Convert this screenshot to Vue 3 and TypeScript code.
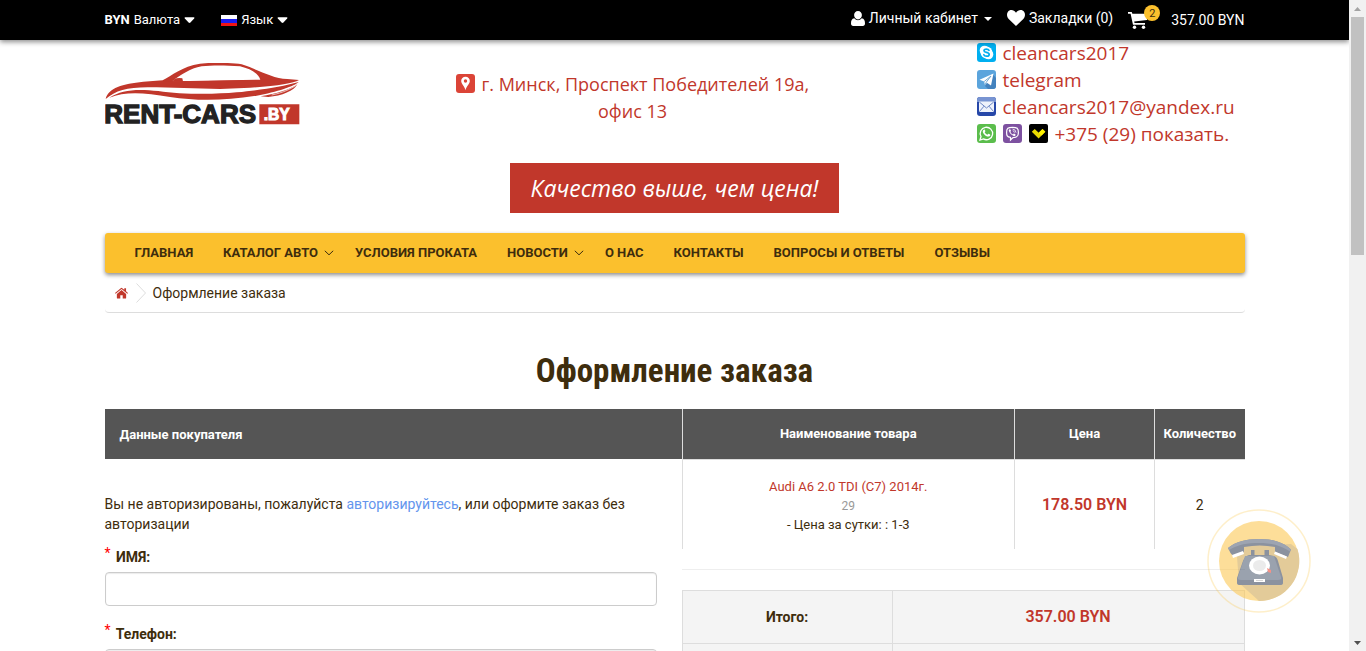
<script setup lang="ts">
import { ref } from 'vue'

interface NavItem {
  title: string
  dropdown?: boolean
}

interface Field {
  id: string
  label: string
}

const navItems: NavItem[] = [
  { title: 'ГЛАВНАЯ' },
  { title: 'КАТАЛОГ АВТО', dropdown: true },
  { title: 'УСЛОВИЯ ПРОКАТА' },
  { title: 'НОВОСТИ', dropdown: true },
  { title: 'О НАС' },
  { title: 'КОНТАКТЫ' },
  { title: 'ВОПРОСЫ И ОТВЕТЫ' },
  { title: 'ОТЗЫВЫ' },
]

const fields: Field[] = [
  { id: 'name', label: 'ИМЯ:' },
  { id: 'phone', label: 'Телефон:' },
]

const values = ref<Record<string, string>>({ name: '', phone: '' })
</script>

<template>
  <div class="shell">
    <div class="page">
      <header class="topbar">
        <div class="container topbar-row">
          <div class="top-left">
            <button type="button" class="top-btn"><strong>BYN</strong> Валюта
              <svg class="caret" viewBox="0 0 12 7"><path d="M1.500 0h9q1.500 0 .6 1.200L7 5.800q-1 1-2 0L.9 1.200Q0 0 1.500 0z" fill="#fff" /></svg>
            </button>
            <button type="button" class="top-btn">
              <svg class="flag" viewBox="0 0 16 11"><path fill="#fff" d="M0 0h16v4H0z" /><path fill="#1c1cf0" d="M0 4h16v4H0z" /><path fill="#f01414" d="M0 8h16v3H0z" /></svg>
              Язык
              <svg class="caret" viewBox="0 0 12 7"><path d="M1.500 0h9q1.500 0 .6 1.200L7 5.800q-1 1-2 0L.9 1.200Q0 0 1.500 0z" fill="#fff" /></svg>
            </button>
          </div>
          <div class="top-right">
            <a href="#" class="top-link">
              <svg class="i-user" viewBox="0 0 14 15"><path fill="#fff" d="M7 0c2.300 0 3.900 1.700 3.900 4S9.300 8.400 7 8.400 3.100 6.300 3.100 4 4.700 0 7 0zM3.300 7.300C4.300 8.600 5.600 9.300 7 9.300s2.700-.7 3.700-2C13.200 7.500 14 9.800 14 12.600 14 14 13.200 15 11.800 15H2.200C.8 15 0 14 0 12.600 0 9.800.8 7.500 3.300 7.300z" /></svg>
              <span>Личный кабинет</span>
              <svg class="tiny-caret" viewBox="0 0 8 4"><path fill="#fff" d="M0 0h8L4 4z" /></svg>
            </a>
            <a href="#" class="top-link">
              <svg class="i-heart" viewBox="0 0 18 16"><path fill="#fff" d="M9 16 1.700 8.900C-.2 7-.5 4 .8 2c1.900-2.700 6-2.600 8.200.7C11.200-.6 15.300-.7 17.200 2c1.300 2 1 5-.9 6.900z" /></svg>
              <span>Закладки (0)</span>
            </a>
            <a href="#" class="top-link cart">
              <span class="cart-icon">
                <svg class="i-cart" viewBox="0 0 19 17"><path fill="#fff" d="M0 0h3.700l.7 1.700H19v6.400L6.200 9.600l.3 1.500H17v1.700H5L2.600 1.700H0z" /><circle cx="6.500" cy="15.200" r="1.700" fill="#fff" /><circle cx="15.500" cy="15.200" r="1.700" fill="#fff" /></svg>
                <span class="badge">2</span>
              </span>
              <span>357.00 BYN</span>
            </a>
          </div>
        </div>
      </header>

      <div class="container head">
        <a href="#" class="logo" aria-label="RENT-CARS.BY">
          <svg viewBox="45 24 585 204">
            <path fill="#c1372b" fill-rule="evenodd" d="M47 132C55 98 98 87 160 80L218 76C248 60 275 35 330 26C362 23 425 22 455 28C505 44 545 70 592 72L627 75C610 85 560 93 480 98L390 102L200 97C120 94 80 103 47 132zM247 79L352 78L511 75C507 58 485 42 450 34C405 31 365 31 335 34C300 40 272 60 247 79z" />
            <path fill="#c1372b" d="M200 79L300 78L512 74L560 74L540 92L200 96z" />
            <path fill="#c1372b" d="M253 73q9-6 24-3l2 9h-32z" />
            <path fill="#c1372b" d="M58 128C95 104 140 101 205 108C270 118 370 119 440 112C520 104 575 95 626 81C615 93 560 111 500 122C400 138 320 138 240 126C160 112 105 109 58 128z" />
            <path fill="#c1372b" d="M512 124C560 116 600 104 622 88C614 107 575 123 535 126z" />
            <path fill="none" stroke="#fff" stroke-width="2" d="M545 120C580 113 602 102 620 90" />
            <text x="43" y="205" font-family="Liberation Sans, Arial, sans-serif" font-weight="700" font-size="78" fill="#222" stroke="#222" stroke-width="4">RENT-CARS</text>
            <path fill="#c1372b" d="M508 148h120v60H508z" />
            <text x="521" y="195" font-family="Liberation Sans, Arial, sans-serif" font-weight="700" font-size="47" fill="#fff" stroke="#fff" stroke-width="3">.BY</text>
          </svg>
        </a>
        <div class="address">
          <svg class="ico" viewBox="0 0 19 19"><rect width="19" height="19" rx="3" fill="#db4437" /><path fill="#fff" fill-rule="evenodd" d="M9.500 2.800c2.500 0 4.300 1.900 4.300 4.300 0 2.900-3.100 4.400-4.300 9.200C8.300 11.500 5.200 10 5.200 7.100c0-2.400 1.800-4.300 4.300-4.300zm0 2.500a1.700 1.700 0 1 0 0 3.400 1.700 1.700 0 0 0 0-3.400z" /></svg>
          г. Минск, Проспект Победителей 19а,<br>офис 13
        </div>
        <div class="contacts">
          <a href="#">
            <svg class="ico" viewBox="0 0 19 19"><rect width="19" height="19" rx="3" fill="#00aff0" /><circle cx="7.500" cy="7.500" r="4.800" fill="#fff" /><circle cx="11.500" cy="11.500" r="4.800" fill="#fff" /><circle cx="9.500" cy="9.500" r="5.900" fill="#fff" /><path fill="none" stroke="#00aff0" stroke-width="1.700" stroke-linecap="round" d="M12 7.300C11.400 6 7 5.500 7 7.700c0 2.100 5.200 1.300 5.200 3.700 0 2.300-4.700 2.200-5.400.3" /></svg>
            cleancars2017</a>
          <a href="#">
            <svg class="ico" viewBox="0 0 19 19"><rect width="19" height="19" rx="3" fill="#5ba4dc" /><path fill="#4382be" d="M8 16 15.500 4 19 8v8q0 3-3 3h-5z" /><path fill="#fff" d="M2.500 9.800 16.500 3.500 14 15.500 9.900 12.700 8 15.300 7.200 11.500z" /><path fill="none" stroke="#73a9d3" stroke-width="1" d="M7.200 11.500 14 6l-4.700 6.200L8 15" /></svg>
            telegram</a>
          <a href="#">
            <svg class="ico" viewBox="0 0 19 19"><rect width="19" height="19" rx="3" fill="#2647a8" /><path fill="#7894d2" d="M3 0h13q3 0 3 3v2H0V3q0-3 3-3z" /><path fill="#eef2fb" d="M2 4.500h15v10.500H2z" /><path fill="none" stroke="#6c86c5" d="m2.300 5 7.200 6 7.200-6M2.300 14.700 7 9.200m9.700 5.500L12 9.200" /></svg>
            cleancars2017@yandex.ru</a>
          <a href="#">
            <svg class="ico" viewBox="0 0 19 19"><rect width="19" height="19" rx="3" fill="#5bbd4c" /><path fill="none" stroke="#fff" stroke-width="1.300" d="m3 16 1-3.500a6.200 6.200 0 1 1 2.400 2.400z" /><path fill="#fff" d="M7 5.500c1-.5 1.600 1.700 1.300 2l-.6.800c.6 1.200 1.400 1.900 2.700 2.400l1-1c.4-.2 2.200.8 2 1.200-.4 1.600-2 2-3.200 1.500C7.900 11.600 6.200 9.800 5.800 8c-.1-1 .4-2 1.200-2.500z" /></svg>
            <svg class="ico" viewBox="0 0 19 19"><rect width="19" height="19" rx="3" fill="#7d51a0" /><path fill="none" stroke="#fff" stroke-width="1.200" d="M7.500 13.400C4 12.800 3.600 11.500 3.600 8.300c0-4 1.400-5 5.900-5s5.900 1 5.900 5-1.400 5.300-5.400 5.300L7.500 16z" /><path fill="#fff" d="M6.700 5.200c.8-.3 1.500 1.700 1.300 1.900l-.6.700c.5 1.300 1.400 2.200 2.600 2.600l.8-.8c.5-.2 2 1 1.800 1.400-.4 1.300-1.400 1.300-2.300.8-2.200-1.100-3.700-2.700-4.500-5 0-.7.300-1.400.9-1.600z" /><path fill="none" stroke="#fff" stroke-width=".8" d="M9.500 5q3.200.2 3.500 3.700M9.700 6.700q1.500.1 1.700 1.900" /></svg>
            <svg class="ico" viewBox="0 0 19 19"><rect width="19" height="19" rx="2" fill="#000" /><path fill="#e8d800" d="M2.800 7.800 5.700 5l4 3.700L13.500 5l2.800 2.800-6.700 6.700z" /><path fill="#fff200" d="m9.700 8.700 3.800-3.700 2.800 2.800-3.700 3.700z" /></svg>
            +375 (29) показать.</a>
        </div>
      </div>

      <div class="slogan"><em>Качество выше, чем цена!</em></div>

      <div class="container">
        <nav class="nav">
          <a v-for="item in navItems" :key="item.title" href="#" :class="{ drop: item.dropdown }">
            {{ item.title }}
            <svg v-if="item.dropdown" class="chev" viewBox="0 0 10 6"><path d="m.8.8 4.200 4 4.200-4" fill="none" stroke="#3e2d0d" /></svg>
          </a>
        </nav>

        <nav class="crumbs">
          <a href="#" aria-label="Главная">
            <svg class="home" viewBox="0 0 14 12"><path fill="#c1372b" d="M7 2.800 12 7v4.300q0 .7-.7.700H8.300V8.300H5.700V12h-3Q2 12 2 11.300V7zM0 6.100 6.200.8q.8-.7 1.600 0L10 2.600V1h1.900v3.200L14 6.100l-.7.8L7 1.700.7 6.900z" /></svg>
          </a>
          <svg class="sep" viewBox="0 0 10 20"><path d="m.5.500 9 9.500-9 9.500" fill="none" stroke="#ddd" /></svg>
          <span>Оформление заказа</span>
        </nav>

        <h1>Оформление заказа</h1>

        <div class="checkout">
          <section class="buyer">
            <h2>Данные покупателя</h2>
            <form @submit.prevent>
              <p>Вы не авторизированы, пожалуйста <a href="#">авторизируйтесь</a>, или оформите заказ без авторизации</p>
              <div v-for="f in fields" :key="f.id" class="field">
                <label :for="f.id"><span class="req">*</span> {{ f.label }}</label>
                <input :id="f.id" v-model="values[f.id]" type="text">
              </div>
            </form>
          </section>

          <section class="order">
            <table class="items">
              <colgroup><col><col class="c-price"><col class="c-qty"></colgroup>
              <thead>
                <tr><th>Наименование товара</th><th>Цена</th><th>Количество</th></tr>
              </thead>
              <tbody>
                <tr>
                  <td>
                    <a href="#" class="prod">Audi A6 2.0 TDI (C7) 2014г.</a>
                    <div class="model">29</div>
                    <div class="option">- Цена за сутки: : 1-3</div>
                  </td>
                  <td class="price">178.50 BYN</td>
                  <td class="qty">2</td>
                </tr>
              </tbody>
            </table>
            <hr>
            <table class="totals">
              <colgroup><col class="t-name"><col></colgroup>
              <tbody>
                <tr><th>Итого:</th><td class="price">357.00 BYN</td></tr>
                <tr><th></th><td></td></tr>
              </tbody>
            </table>
          </section>
        </div>
      </div>

      <button type="button" class="callback" aria-label="Заказать звонок">
        <svg viewBox="0 0 104 104">
          <circle cx="52" cy="52" r="51" fill="none" stroke="#fbc02d" stroke-opacity=".25" stroke-width="1.500" />
          <g opacity=".6">
            <circle cx="52" cy="52" r="40" fill="#fcc955" />
            <path fill="#d1a956" d="M22 38 84 35l6.500 5A40 40 0 0 1 52 92L32 74l-2-26z" />
            <path fill="#d1a956" d="M37 36h32v14H37z" />
            <path fill="#3f4a60" d="M21 39C28 33 39 30 52 30s25 3 32 10.500l-3 7.500-13-5V38q-15-3-31 0v5l-11 4q-3-3-5-8z" />
            <path fill="#5c687d" d="M21 39C28 33 39 30 52 30s25 3 32 10.500l-1 2C73 36 64 34 52 34s-20 1-30 7z" />
            <path fill="#fff" d="m25 46 11-4 1 3-11 4zM68 42.500l12 5-1 2.500-12-5z" />
            <path fill="#3f4a60" d="M44 41h3.500v5h10v-5H62v5l5 1q3 1 4 5l5 17v5q0 2-3 2H33q-3 0-3-2v-5l6-17q2-5 6-6h2z" />
            <path fill="#586479" d="M38 47h29l7 21q1 3-3 3H34q-4 0-3-3z" />
            <ellipse cx="52.500" cy="56.500" rx="10.500" ry="9" fill="#fff" />
            <ellipse cx="52.500" cy="56.500" rx="6.500" ry="5.500" fill="#dedede" />
            <path fill="#f04938" d="m60 59 4 2v3l-3-1z" />
            <path fill="#fff" d="M47 70h11v3H47z" />
            <path stroke="#bbb" d="M49 71.500h7" />
          </g>
        </svg>
      </button>
    </div>

    <div class="scroll" aria-hidden="true">
      <svg viewBox="0 0 17 17"><path fill="#a3a3a3" d="M5 11h7L8.500 7z" /></svg>
      <div class="thumb" />
      <svg viewBox="0 0 17 17"><path fill="#505050" d="M5 7h7l-3.500 4z" /></svg>
    </div>
  </div>
</template>

<style>
html,
body {
  margin: 0;
  background: #fff;
}
</style>

<style scoped>
* {
  box-sizing: border-box;
}
.shell {
  display: flex;
  height: 100vh;
  overflow: hidden;
  font: 14px/20px Roboto, "Open Sans", sans-serif;
  color: #3e2d0d;
}
.page {
  flex: 1;
  min-width: 0;
  overflow: hidden;
}
a {
  color: #c1372b;
  text-decoration: none;
}
button {
  border: 0;
  padding: 0;
  background: none;
  font: inherit;
  color: inherit;
  cursor: pointer;
}
svg {
  display: block;
}
.container {
  max-width: 1140px;
  margin: 0 auto;
}
.topbar {
  position: relative;
  z-index: 1;
  background: #000;
  color: #fff;
  box-shadow: 0 2px 5px rgba(0, 0, 0, 0.45);
}
.topbar-row {
  display: flex;
  justify-content: space-between;
  height: 40px;
}
.top-left {
  display: flex;
  align-items: center;
  gap: 26px;
  font-size: 13px;
}
.top-btn,
.top-link {
  display: flex;
  align-items: center;
  gap: 4px;
  color: #fff;
  white-space: nowrap;
}
.top-right {
  display: flex;
  gap: 15px;
  height: 36px;
}
.caret {
  width: 11px;
  height: 7px;
}
.flag {
  width: 16px;
  height: 11px;
}
.i-user {
  width: 14px;
  height: 15px;
}
.i-heart {
  width: 18px;
  height: 16px;
}
.tiny-caret {
  width: 8px;
  height: 4px;
  margin: 2px 0 0 2px;
}
.cart {
  gap: 11px;
  height: 40px;
}
.cart-icon {
  position: relative;
  width: 32px;
}
.i-cart {
  width: 19px;
  height: 17px;
}
.badge {
  position: absolute;
  top: -7px;
  right: 0;
  width: 16px;
  height: 16px;
  border-radius: 50%;
  background: #fbc02d;
  color: #3e2d0d;
  font-size: 11px;
  line-height: 17px;
  text-align: center;
}
.head {
  display: grid;
  grid-template-columns: 350fr 356fr 434fr;
  font-family: "Open Sans", "Noto Sans", sans-serif;
  font-size: 18px;
  line-height: 27px;
  color: #c1372b;
}
.logo {
  padding-top: 23px;
}
.logo svg {
  width: 195px;
  height: 68px;
}
.address {
  padding-top: 31px;
  text-align: center;
  white-space: nowrap;
}
.ico {
  display: inline-block;
  width: 19px;
  height: 19px;
  margin-right: 2px;
  vertical-align: -2px;
}
.ico + .ico {
  margin-left: 5px;
}
.contacts {
  justify-self: end;
  width: 268px;
  font-size: 19px;
  white-space: nowrap;
}
.contacts a {
  display: block;
}
.slogan {
  width: fit-content;
  margin: 15px auto 20px;
  padding: 0 21px;
  background: #c1372b;
  color: #fff;
  font: 23px/50px "Open Sans", "Noto Sans", sans-serif;
}
.nav {
  display: flex;
  gap: 30px;
  padding: 0 30px;
  border-radius: 3px;
  background: #fbc02d;
  box-shadow: 0 2px 4px rgba(0, 0, 0, 0.45);
  font-size: 13px;
  font-weight: 700;
  line-height: 40px;
  white-space: nowrap;
}
.nav a {
  display: flex;
  align-items: center;
  gap: 6px;
  color: #3e2d0d;
}
.nav .drop {
  margin-right: -9px;
}
.chev {
  width: 10px;
  height: 6px;
}
.crumbs {
  display: flex;
  align-items: center;
  height: 40px;
  padding: 1px 0 0 10px;
  border-bottom: 1px solid #ddd;
  border-radius: 4px;
}
.home {
  width: 13px;
  height: 12px;
}
.sep {
  width: 10px;
  height: 20px;
  margin: 0 7px 0 8px;
}
h1 {
  margin: 37px 0 18px;
  font: 700 33px/41px "Roboto Condensed", "Liberation Sans Narrow", Roboto, sans-serif;
  text-align: center;
}
.checkout {
  display: grid;
  grid-template-columns: 577fr 563fr;
}
h2 {
  margin: 0;
  padding: 1px 0 0 15px;
  background: #555;
  color: #fff;
  font-size: 13px;
  font-weight: 700;
  line-height: 49px;
}
form {
  padding: 35px 25px 0 0;
}
p {
  margin: 0 0 10px;
}
p a {
  color: #6495ed;
}
.field {
  margin-bottom: 15px;
}
label {
  display: block;
  margin-bottom: 2px;
  font-weight: 700;
  line-height: 26px;
}
.req {
  margin-right: 2px;
  color: #f00;
  font-weight: 400;
  vertical-align: 4px;
  line-height: 14px;
}
input {
  display: block;
  width: 100%;
  height: 34px;
  border: 1px solid #ccc;
  border-radius: 4px;
  padding: 6px 12px;
  background: #fff;
  box-shadow: inset 0 1px 1px rgba(0, 0, 0, 0.08);
  font: inherit;
}
table {
  width: 100%;
  border-collapse: collapse;
  table-layout: fixed;
  text-align: center;
}
.items th {
  height: 50px;
  padding: 1px 0 0;
  border-left: 1px solid #ddd;
  background: #555;
  color: #fff;
  font-size: 13px;
  font-weight: 700;
}
.items td {
  height: 90px;
  padding: 1px 0 0;
  border-left: 1px solid #ddd;
  border-top: 1px solid #ddd;
}
.c-price {
  width: 140px;
}
.c-qty {
  width: 90px;
}
.prod,
.option {
  font-size: 13px;
  line-height: 18px;
}
.model {
  color: #999;
  font-size: 12px;
  line-height: 20px;
}
.price {
  color: #c1372b;
  font-size: 16px;
  font-weight: 600;
}
hr {
  margin: 20px 0;
  border: 0;
  border-top: 1px solid #eee;
}
.totals {
  background: #f4f4f4;
}
.totals th,
.totals td {
  height: 53px;
  padding: 0;
  border: 1px solid #ddd;
}
.totals th {
  font-weight: 700;
}
.t-name {
  width: 210px;
}
.callback {
  position: fixed;
  right: 55px;
  bottom: 38px;
  width: 104px;
  height: 104px;
}
.scroll {
  display: flex;
  flex-direction: column;
  width: 17px;
  background: #f1f1f1;
}
.scroll svg {
  width: 17px;
  height: 17px;
  margin-top: auto;
}
.scroll svg:first-child {
  margin-top: 0;
}
.thumb {
  height: 238px;
  margin: 0 2px;
  background: #c1c1c1;
}
</style>
